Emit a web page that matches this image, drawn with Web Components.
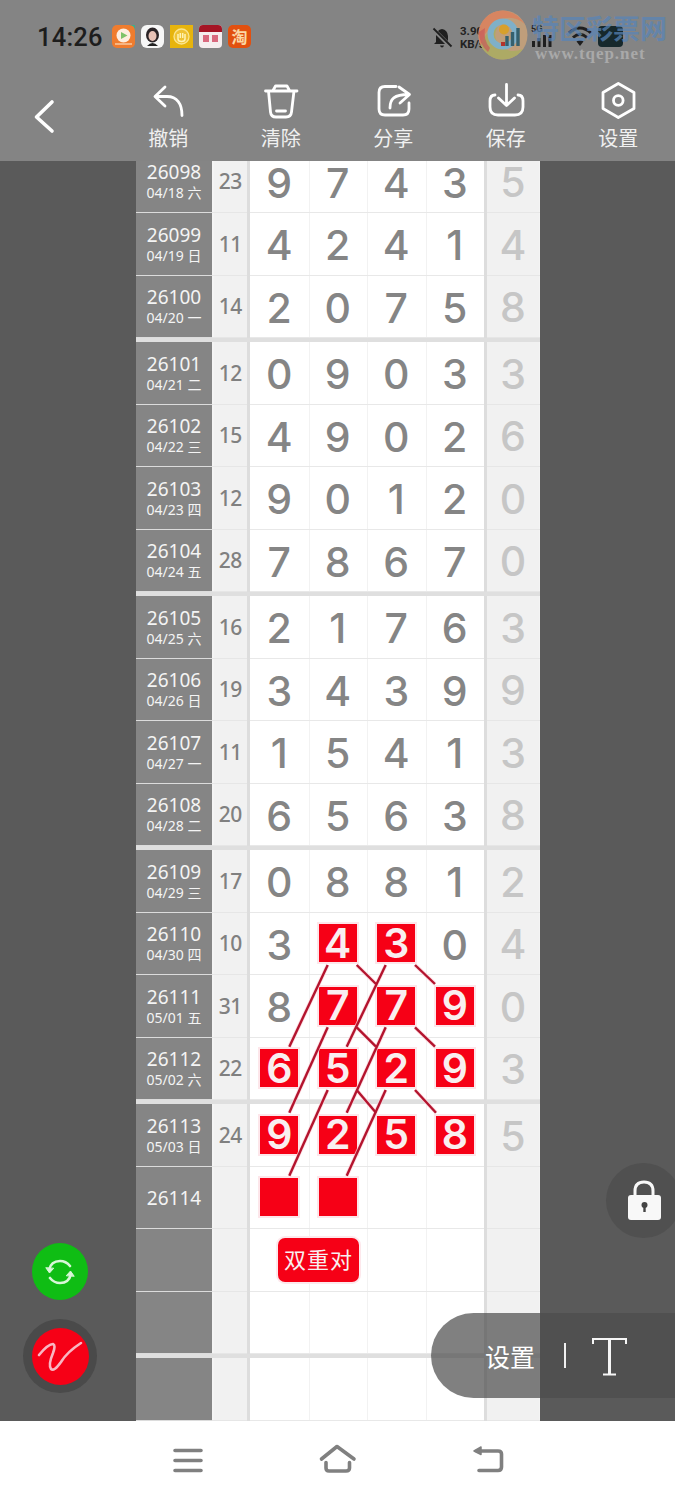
<!DOCTYPE html>
<html lang="zh"><head><meta charset="utf-8"><title>双重对</title>
<style>
html,body{margin:0;padding:0;height:1500px;overflow:hidden;background:#fff;font-family:"Noto Sans","Noto Sans CJK SC",sans-serif}
app-shell{width:675px;height:1500px}
</style></head><body>
<app-shell>
  <status-bar slot="status"></status-bar>
  <tool-bar slot="tools">
    <tool-action label="撤销"><svg viewBox="148 81 40 40" width="40" height="40" fill="none" stroke="#fff" stroke-width="2.8" stroke-linecap="round" stroke-linejoin="round"><path d="M165 87 155 96.5 165 106M155.500 96.500H167C177 96.500 182 104 182 115.500"/></svg></tool-action>
    <tool-action label="清除"><svg viewBox="261 81 40 40" width="40" height="40" fill="none" stroke="#fff" stroke-width="2.8" stroke-linecap="round" stroke-linejoin="round"><path d="M265.500 91H297M273 90.500 275.500 86H287L289.500 90.500M268.500 91 270.500 112Q271 117 276 117H286Q291 117 291.500 112L294 91M276.500 111H285.500"/></svg></tool-action>
    <tool-action label="分享"><svg viewBox="373 81 40 40" width="40" height="40" fill="none" stroke="#fff" stroke-width="2.8" stroke-linecap="round" stroke-linejoin="round"><path d="M396 86.500H385Q379 86.500 379 92.500V109Q379 115 385 115H403Q409 115 409 109V103M390 108C390 99 394 94.500 408.500 94.500M399 87 409.500 94.500 400 103"/></svg></tool-action>
    <tool-action label="保存"><svg viewBox="486 81 40 40" width="40" height="40" fill="none" stroke="#fff" stroke-width="2.8" stroke-linecap="round" stroke-linejoin="round"><path d="M495 95Q490 95 490 101V107Q490 115 498 115H515Q523 115 523 107V101Q523 95 518 95M506.500 84.500V105M498.500 98 506.500 105.500 514.500 98"/></svg></tool-action>
    <tool-action label="设置"><svg viewBox="598 81 40 40" width="40" height="40" fill="none" stroke="#fff" stroke-width="2.8" stroke-linecap="round" stroke-linejoin="round"><path d="M618.300 83.500 634 92.500V108.500L618.300 117.500 603 108.500V92.500Z"/><circle cx="618.300" cy="100.500" r="4.800"/></svg></tool-action>
  </tool-bar>
  <lottery-board slot="board">
    <row-group>
      <lottery-row no="26098" date="04/18 六" sum="23" nums="9 7 4 3" last="5"></lottery-row>
      <lottery-row no="26099" date="04/19 日" sum="11" nums="4 2 4 1" last="4"></lottery-row>
      <lottery-row no="26100" date="04/20 一" sum="14" nums="2 0 7 5" last="8"></lottery-row>
    </row-group>
    <row-group>
      <lottery-row no="26101" date="04/21 二" sum="12" nums="0 9 0 3" last="3"></lottery-row>
      <lottery-row no="26102" date="04/22 三" sum="15" nums="4 9 0 2" last="6"></lottery-row>
      <lottery-row no="26103" date="04/23 四" sum="12" nums="9 0 1 2" last="0"></lottery-row>
      <lottery-row no="26104" date="04/24 五" sum="28" nums="7 8 6 7" last="0"></lottery-row>
    </row-group>
    <row-group>
      <lottery-row no="26105" date="04/25 六" sum="16" nums="2 1 7 6" last="3"></lottery-row>
      <lottery-row no="26106" date="04/26 日" sum="19" nums="3 4 3 9" last="9"></lottery-row>
      <lottery-row no="26107" date="04/27 一" sum="11" nums="1 5 4 1" last="3"></lottery-row>
      <lottery-row no="26108" date="04/28 二" sum="20" nums="6 5 6 3" last="8"></lottery-row>
    </row-group>
    <row-group>
      <lottery-row no="26109" date="04/29 三" sum="17" nums="0 8 8 1" last="2"></lottery-row>
      <lottery-row no="26110" date="04/30 四" sum="10" nums="3 *4 *3 0" last="4"></lottery-row>
      <lottery-row no="26111" date="05/01 五" sum="31" nums="8 *7 *7 *9" last="0"></lottery-row>
      <lottery-row no="26112" date="05/02 六" sum="22" nums="*6 *5 *2 *9" last="3"></lottery-row>
    </row-group>
    <row-group>
      <lottery-row no="26113" date="05/03 日" sum="24" nums="*9 *2 *5 *8" last="5"></lottery-row>
      <lottery-row no="26114" nums="* * - -"></lottery-row>
      <lottery-row nums="- - - -"></lottery-row>
      <lottery-row nums="- - - -"></lottery-row>
    </row-group>
    <row-group>
      <lottery-row nums="- - - -"></lottery-row>
    </row-group>
  </lottery-board>
  <nav-bar slot="nav"></nav-bar>
</app-shell>
<script>
const def=(name,html)=>customElements.define(name,class extends HTMLElement{
  connectedCallback(){ if(this.shadowRoot) return; const r=this.attachShadow({mode:'open'}); r.innerHTML=typeof html==='function'?html(this):html; }
});
def('app-shell',`<style>:host{display:flex;flex-direction:column;position:relative;overflow:hidden;background:#fff}
 .top{background:#848484;position:relative}
 </style><div class="top"><slot name="status"></slot><slot name="tools"></slot></div><slot name="board"></slot><slot name="nav"></slot>`);

def('status-bar',`<style>
:host{display:flex;align-items:flex-start;height:70px;position:relative;box-sizing:border-box;padding:24px 0 0 37px;color:#1d1d1d}
.time{font:500 25.500px/26px Roboto,"Noto Sans",sans-serif;letter-spacing:.2px;width:75px}
.apps{display:flex;gap:6px;margin-top:1px}
.apps svg,.tile{width:23px;height:23px;display:block;flex:none}
.tile{background:#e2500f;border-radius:5px;color:#fbd8a6;font:700 16px/23px "Noto Sans CJK SC",sans-serif;text-align:center}
.bell{position:absolute;left:431px;top:27px}
.net{position:absolute;left:460px;top:25px;font:700 11.500px/12px Roboto,sans-serif;color:#222}
.net div{height:13px}
.g5{position:absolute;left:531px;top:25px;font:700 9px/9px Roboto,sans-serif;color:#222}
.logo{position:absolute;left:478px;top:10px}
.sig{position:absolute;left:531px;top:24px}
.wm{position:absolute;left:532px;top:11px;font:700 27px/34px "Noto Sans CJK SC",sans-serif;color:rgba(88,132,184,.74);white-space:nowrap}
.url{position:absolute;left:535px;top:44px;font:700 17px/20px "Liberation Serif",serif;color:#a9a9a9;letter-spacing:.95px;white-space:nowrap}
</style>
<div class="time">14:26</div>
<div class="apps">
 <svg viewBox="0 0 23 23"><rect width="23" height="23" rx="5" fill="#ef7c2e"/><path d="M23 6V15A9 9 0 0 0 10 0H17Q23 0 23 6Z" fill="#3cae8e"/><circle cx="11.500" cy="10.500" r="7" fill="#fdeee0"/><path d="M9 7 15.500 10.500 9 14Z" fill="#7ec36a"/><path d="M3 19H20" stroke="#f9c9a0" stroke-width="1.500"/></svg>
 <svg viewBox="0 0 23 23"><rect width="23" height="23" rx="6" fill="#f7f7f7"/><ellipse cx="11.500" cy="10" rx="6.500" ry="7.500" fill="#2a2326"/><ellipse cx="11.500" cy="11" rx="4" ry="5" fill="#e8c2b6"/><path d="M6 21Q11.500 15 17 21Z" fill="#222"/></svg>
 <svg viewBox="0 0 23 23"><rect width="23" height="23" fill="#e7b40d"/><circle cx="11.500" cy="11.500" r="7.500" fill="#efc234" stroke="#fbe58e" stroke-width="1.300"/><path d="M8 9V14Q8 16.500 11.500 16.500T15 14V9M10.300 8V13M12.700 8V13" fill="none" stroke="#fff3b4" stroke-width="1.500"/></svg>
 <svg viewBox="0 0 23 23"><rect width="23" height="23" rx="4" fill="#f5edee"/><path d="M0 7V4Q0 0 4 0H19Q23 0 23 4V7Z" fill="#a51525"/><rect x="4" y="10" width="6" height="7" fill="#d9697e"/><rect x="13" y="10" width="6" height="7" fill="#d9697e"/></svg>
 <div class="tile">淘</div>
</div>
<svg class="bell" width="22" height="22" viewBox="0 0 22 22"><path d="M11 2Q16.500 3 17 9V15L19 17H3L5 15V9Q5.500 3 11 2ZM9 18.500H13Q12.500 20.500 11 20.500T9 18.500Z" fill="#1f1f1f"/><path d="M2 2 20 20" stroke="#848484" stroke-width="4"/><path d="M2.500 1.500 20.500 19.500" stroke="#1f1f1f" stroke-width="1.800"/></svg>
<div class="net"><div>3.90</div><div>KB/s</div></div>
<div class="g5">5G</div>
<svg class="sig" width="92" height="24" viewBox="0 0 92 24"><g fill="#1f1f1f"><rect x="1" y="17" width="3" height="6"/><rect x="6.500" y="14" width="3" height="9"/><rect x="12" y="11" width="3" height="12"/><rect x="17.500" y="11" width="3" height="12"/><rect x="67" y="2" width="25" height="21" rx="4" fill="#16282c"/></g><path d="M38 9Q49 -1 60 9M42 13.500Q49 7 56 13.500" fill="none" stroke="#1f1f1f" stroke-width="3"/><path d="M45.500 17.500Q49 14.500 52.500 17.500L49 22Z" fill="#1f1f1f"/></svg>
<div class="wm">特区彩票网</div>
<div class="url">www.tqep.net</div>
<svg class="logo" width="50" height="50" viewBox="0 0 50 50"><circle cx="25" cy="25" r="24.500" fill="#c9a279" opacity=".85"/><path d="M25 .5A24.500 24.500 0 0 0 3 36Q6 18 24 9 36 5 47 14 38 1 25 .5Z" fill="#d9825e" opacity=".9"/><path d="M3 36A24.500 24.500 0 0 0 45 39Q30 45 20 33 14 25 20 17 5 23 3 36Z" fill="#a9ab62" opacity=".85"/><path d="M1 22Q1 34 10 42L12 38Q5 30 7 18Z" fill="#c75a5a" opacity=".7"/><circle cx="25" cy="24" r="12.500" fill="none" stroke="#7fb0c8" stroke-width="6"/><circle cx="26" cy="19.500" r="5" fill="#d7a02c"/><path d="M29 36V26M34.500 36V22M40 36V18" stroke="#34606e" stroke-width="3.400"/><path d="M23 34H27" stroke="#b3332a" stroke-width="4"/></svg>`);

def('tool-bar',`<style>:host{display:grid;grid-template-columns:repeat(5,112.500px);height:91px;padding-left:112px;box-sizing:border-box;position:relative}
.back{position:absolute;left:32px;top:28px}</style>
<svg class="back" width="24" height="38" viewBox="0 0 24 38" fill="none" stroke="#fff" stroke-width="3.600" stroke-linecap="round" stroke-linejoin="round"><path d="M20 4 4.500 19 20 33"/></svg><slot></slot>`);

def('tool-action',h=>`<style>:host{display:flex;flex-direction:column;align-items:center;padding-top:11px;color:#f0f0f0}
::slotted(svg){display:block}
.l{font:400 20px/22px "Noto Sans CJK SC",sans-serif;margin-top:6px}</style><slot></slot><div class="l">${h.getAttribute('label')}</div>`);

const L=[[327.7,965,289.3,1046.7],[356.7,965,376,984],[385.7,965,346.7,1046.7],[415,965,435,984],
[327.7,1027.3,289.3,1112.7],[356.7,1027.3,376,1046.7],[385.7,1027.3,346.7,1112.7],[415,1027.3,435,1046.7],
[327.7,1090,289.3,1175.7],[356.7,1090,376,1112.7],[385.7,1090,346.7,1175.7],[415,1090,436,1112.7]];
const seg=L.map(a=>`<line x1="${a[0]}" y1="${a[1]}" x2="${a[2]}" y2="${a[3]}"/>`).join('');
def('lottery-board',`<style>
:host{display:flex;height:1260px;position:relative;overflow:hidden;background:#5a5a5a}
.table{width:404px;margin-left:136px;margin-top:-10.500px;flex:none}
svg.ln{position:absolute;left:0;top:0;pointer-events:none}
.pair{position:absolute;left:278px;top:1077px;width:81px;height:44px;border-radius:7px;background:#f60016;box-shadow:0 0 0 2px #fde8ec;color:#f8f0f0;font:400 22px/40px "Noto Sans CJK SC",sans-serif;text-align:center;letter-spacing:1px}
.fab{position:absolute;border-radius:50%;display:flex;align-items:center;justify-content:center}
.green{left:32px;top:1082px;width:56px;height:57px;background:#0fbd14}
.ring{left:23px;top:1158px;width:74px;height:74px;background:#4a4a4a}
.red{width:57px;height:57px;border-radius:50%;background:#f60016;display:flex;align-items:center;justify-content:center}
.lock{left:606px;top:1002px;width:75px;height:75px;background:#505050}
.pill{position:absolute;left:431px;top:1152px;width:244px;height:85px;border-radius:43px 0 0 43px;background:rgba(76,76,76,.71);display:flex;align-items:center;padding-left:54px;box-sizing:border-box;color:#fff}
.pill b{font:400 25px/30px "Noto Sans CJK SC",sans-serif}
.pill i{display:block;width:2px;height:25px;background:#f0f0f0;margin:0 25px 0 29px}
</style>
<div class="table"><slot></slot></div>
<svg class="ln" width="675" height="1260" viewBox="0 161 675 1260" fill="none" stroke-linecap="butt"><g stroke="#ffd9df" stroke-width="4" opacity=".8">${seg}</g><g stroke="#b3142e" stroke-width="2.400">${seg}</g></svg>
<div class="pair">双重对</div>
<div class="fab green"><svg width="34" height="34" viewBox="0 0 34 34" fill="none" stroke="#d8f7d8" stroke-width="2.600" stroke-linecap="round"><path d="M6 15Q8 6 17 6 23 6 27 11M28 19Q26 28 17 28 11 28 7 23"/><path d="M3 13 6.500 18 10.500 13.500Z M31 21 27.500 16 23.500 20.500Z" fill="#d8f7d8" stroke-width="1"/></svg></div>
<div class="fab ring"><div class="red"><svg width="50" height="42" viewBox="0 0 50 42" fill="none" stroke="#f8b6c2" stroke-width="2.600" stroke-linecap="round" stroke-linejoin="round"><path d="M4 20Q13 9 18 9 21 10 18 18 13 30 16 34 19 37 26 27 32 17 46 8"/></svg></div></div>
<div class="fab lock"><svg width="38" height="42" viewBox="0 0 38 42"><path d="M10 20V11Q10 2 19 2T28 11V20" fill="none" stroke="#f8f8f8" stroke-width="3"/><rect x="3" y="15" width="33" height="25" rx="3" fill="#f8f8f8"/><circle cx="19.500" cy="25" r="3" fill="#444"/><path d="M19.500 26V32" stroke="#444" stroke-width="2.400"/></svg></div>
<div class="pill"><b>设置</b><i></i><svg width="38" height="40" viewBox="0 0 38 40" fill="none" stroke="#f6f6f6"><path d="M2 8V3H35V8" stroke-width="2"/><path d="M18.500 3V38" stroke-width="3"/><path d="M12 38.500H25" stroke-width="2"/></svg></div>`);

def('row-group',`<style>:host{display:block;padding-bottom:4px;background:#dfdfdf}</style><slot></slot>`);

def('lottery-row',h=>{
 const a=n=>h.getAttribute(n)||'';
 const cells=a('nums').split(' ').map(t=>{
   if(t==='-') return '<div class="c"></div>';
   if(t[0]==='*') return `<div class="c"><span class="hit">${t.slice(1)}</span></div>`;
   return `<div class="c"><span class="d">${t}</span></div>`;
 }).join('');
 return `<style>
:host{display:grid;grid-template-columns:76px 2px 32.500px 3.500px 234px 3px 52px 1px;height:62.500px;background:#fff}
.no{background:#858585;color:#f4f4f4;display:flex;flex-direction:column;align-items:center;justify-content:center;border-bottom:1.500px solid #dcdcdc;box-sizing:border-box;padding-top:3px}
.no b{font:400 19px/21px "Noto Sans","Noto Sans CJK SC",sans-serif;}
.no small{font:400 14px/20px "Noto Sans","Noto Sans CJK SC",sans-serif;white-space:nowrap}
.g{background:#f4f4f4;border-bottom:1.500px solid #e6e6e6;box-sizing:border-box}
.sep{background:#dddddd}
.sum{background:#f1f1f1;color:#808080;font:500 21px/1 "Noto Sans",sans-serif;display:flex;align-items:center;justify-content:center;border-bottom:1.500px solid #e6e6e6;box-sizing:border-box;letter-spacing:-.5px;padding-top:1px}
.nums{display:grid;grid-template-columns:repeat(4,1fr);background:#fff;border-bottom:1.500px solid #e8e8e8;box-sizing:border-box}
.c{display:flex;align-items:center;justify-content:center;box-shadow:inset 1px 0 0 #f2f2f2;font:500 41px/1 Inter,"Noto Sans",sans-serif;color:#858585}
.c:first-child{box-shadow:none}
.d{position:relative;top:2px}
.hit{width:38px;height:38px;background:#f60016;color:#f9eff0;box-shadow:0 0 0 2px #fde6ea;display:flex;align-items:center;justify-content:center;font-weight:600}
.last{background:#f1f1f1;color:#c6c6c6;font:500 41px/1 Inter,"Noto Sans",sans-serif;display:flex;align-items:center;justify-content:center;border-bottom:1.500px solid #e6e6e6;box-sizing:border-box;padding-top:3px}
</style>
<div class="no"><b>${a('no')}</b>${a('date')?`<small>${a('date')}</small>`:''}</div><div class="g"></div><div class="sum">${a('sum')}</div><div class="sep"></div><div class="nums">${cells}</div><div class="sep"></div><div class="last">${a('last')}</div><div class="g"></div>`;
});

def('nav-bar',`<style>:host{display:block;height:79px;background:#fff;position:relative}
svg{position:absolute;left:0;top:0}</style>
<svg width="675" height="79" viewBox="0 1421 675 79" fill="none" stroke="#808080" stroke-width="3.600" stroke-linecap="round" stroke-linejoin="round"><path d="M175 1450.500H201M175 1460.500H201M175 1470.500H201"/><path d="M321.500 1459 337 1446.500 354 1459M326 1462.500V1468Q326 1471 329 1471H346Q349.500 1471 349.500 1468V1462.500"/><path d="M477 1451H498Q501.500 1451 501.500 1454V1467Q501.500 1470.500 498 1470.500H479"/><path d="M481 1447 474 1451 481 1454.500Z" fill="#808080" stroke-width="1.500"/></svg>`);
</script>
</body></html>
